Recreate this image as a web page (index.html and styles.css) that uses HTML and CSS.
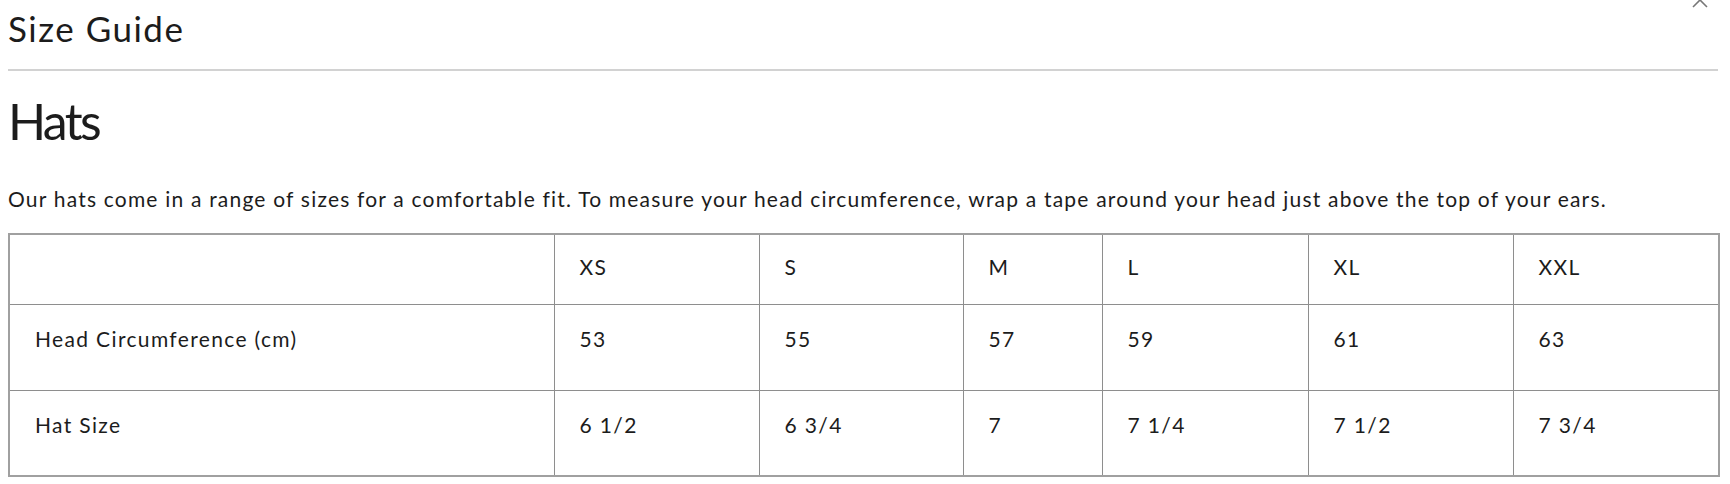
FILE: index.html
```html
<!DOCTYPE html>
<html lang="en">
<head>
<meta charset="utf-8">
<title>Size Guide</title>
<link rel="stylesheet" href="styles.css">
</head>
<body>
<div class="modal">
  <button class="close" aria-label="Close">
    <svg viewBox="0 0 16 16" width="16" height="16"><path d="M1 1 L15 15 M15 1 L1 15" fill="none" stroke="#777" stroke-width="1.6"/></svg>
  </button>
  <header class="modal-header">
    <h1 class="modal-title">Size Guide</h1>
  </header>
  <section class="guide">
    <h2 class="guide-title">Hats</h2>
    <p class="guide-text">Our hats come in a range of sizes for a comfortable fit. To measure your head circumference, wrap a tape around your head just above the top of your ears.</p>
    <table class="size-table">
      <colgroup>
        <col class="c-label">
        <col class="c-xs">
        <col class="c-s">
        <col class="c-m">
        <col class="c-l">
        <col class="c-xl">
        <col class="c-xxl">
      </colgroup>
      <thead>
        <tr>
          <th></th><th>XS</th><th>S</th><th>M</th><th>L</th><th>XL</th><th>XXL</th>
        </tr>
      </thead>
      <tbody>
        <tr>
          <td>Head Circumference (cm)</td><td>53</td><td>55</td><td>57</td><td>59</td><td>61</td><td>63</td>
        </tr>
        <tr>
          <td>Hat Size</td><td>6 1/2</td><td>6 3/4</td><td>7</td><td>7 1/4</td><td>7 1/2</td><td>7 3/4</td>
        </tr>
      </tbody>
    </table>
  </section>
</div>
</body>
</html>
```
FILE: styles.css
```css
html, body {
  margin: 0;
  padding: 0;
  background: #fff;
}
body {
  font-family: Lato, "Open Sans", sans-serif;
  color: #1c1c1c;
  overflow: hidden;
}
.modal {
  position: relative;
  width: 1710px;
  padding-left: 8px;
}
.close {
  position: absolute;
  left: 1692px;
  top: -8px;
  width: 16px;
  height: 16px;
  padding: 0;
  border: 0;
  background: none;
}
.close svg { display: block; }
.modal-header {
  padding-top: 7px;
  padding-bottom: 20px;
  border-bottom: 2px solid #d2d2d2;
}
.modal-title {
  margin: 0;
  font-size: 35px;
  line-height: 42px;
  font-weight: 400;
  letter-spacing: 1.5px;
}
.guide-title {
  margin: 20px 0 0;
  font-size: 50px;
  line-height: 60px;
  font-weight: 400;
  letter-spacing: -2.6px;
}
.guide-text {
  margin: 35px 0 0;
  font-size: 21px;
  line-height: 25px;
  letter-spacing: 1.2px;
}
.size-table {
  margin-top: 22px;
  width: 1710px;
  table-layout: fixed;
  border-collapse: collapse;
  border: 2px solid #a0a0a0;
  font-size: 21px;
  line-height: 25px;
  letter-spacing: 1.35px;
}
.c-label { width: 545px; }
.c-xs { width: 205px; }
.c-s { width: 204px; }
.c-m { width: 139px; }
.c-l { width: 206px; }
.c-xl { width: 205px; }
.c-xxl { width: 206px; }
.size-table th,
.size-table td {
  border: 1px solid #8e8e8e;
  text-align: left;
  vertical-align: top;
  font-weight: 400;
  padding: 0 10px 0 25px;
}
.size-table th {
  height: 70px;
  padding-top: 19px;
  box-sizing: border-box;
}
.size-table td {
  height: 86px;
  padding-top: 21px;
  box-sizing: border-box;
}
```
